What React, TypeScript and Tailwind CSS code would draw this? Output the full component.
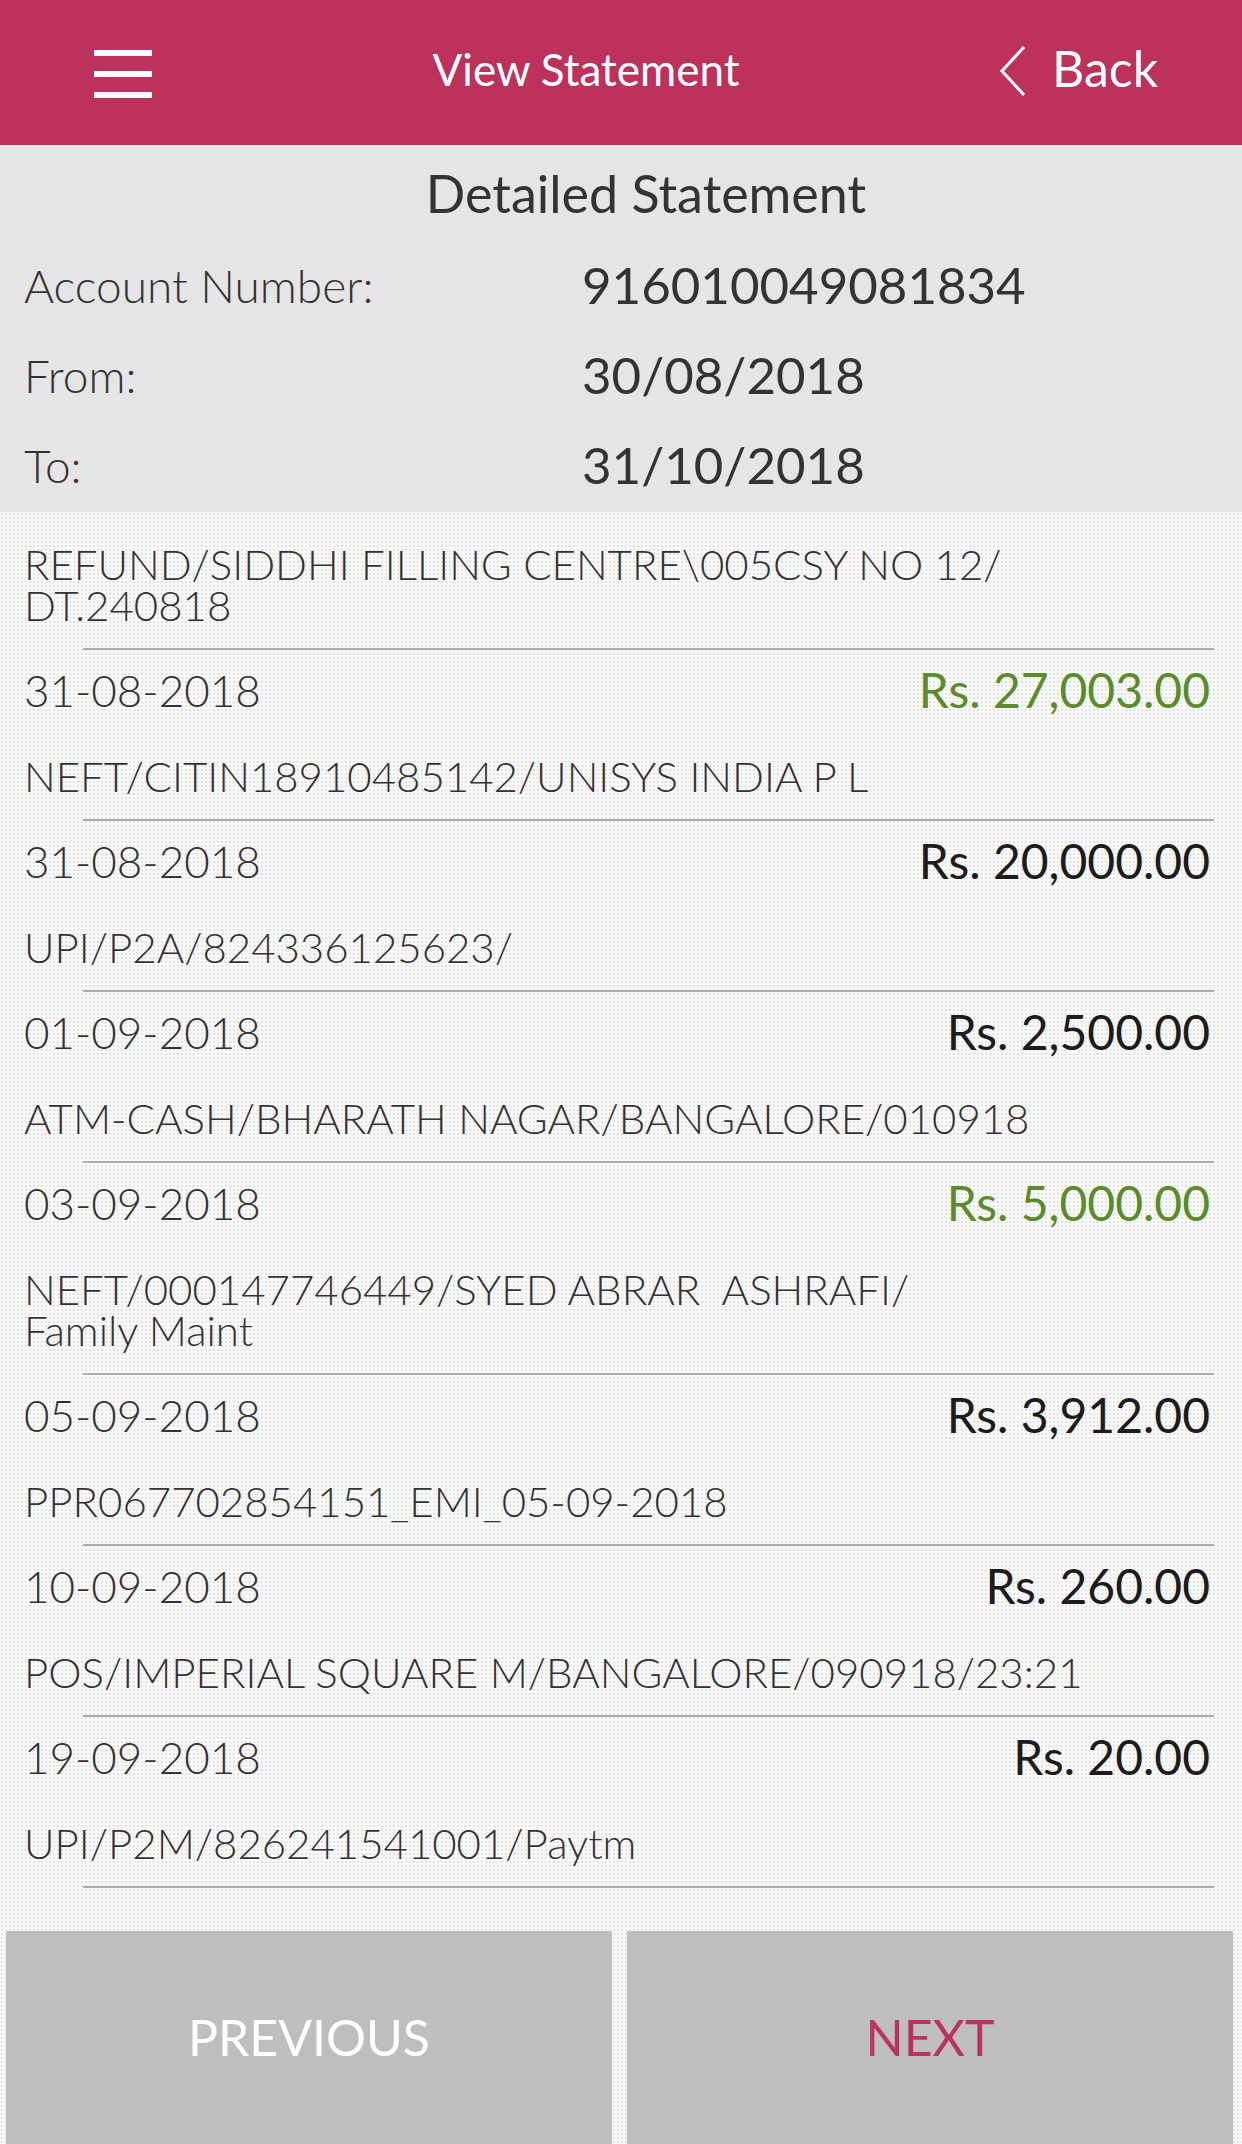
import React from "react";

type Tx = { desc: string[]; date: string; amount: string; credit?: boolean; last?: boolean };

const txs: Tx[] = [
  { desc: ["REFUND/SIDDHI FILLING CENTRE\\005CSY NO 12/", "DT.240818"], date: "31-08-2018", amount: "Rs. 27,003.00", credit: true },
  { desc: ["NEFT/CITIN18910485142/UNISYS INDIA P L"], date: "31-08-2018", amount: "Rs. 20,000.00" },
  { desc: ["UPI/P2A/824336125623/"], date: "01-09-2018", amount: "Rs. 2,500.00" },
  { desc: ["ATM-CASH/BHARATH NAGAR/BANGALORE/010918"], date: "03-09-2018", amount: "Rs. 5,000.00", credit: true },
  { desc: ["NEFT/000147746449/SYED ABRAR  ASHRAFI/", "Family Maint"], date: "05-09-2018", amount: "Rs. 3,912.00" },
  { desc: ["PPR067702854151_EMI_05-09-2018"], date: "10-09-2018", amount: "Rs. 260.00" },
  { desc: ["POS/IMPERIAL SQUARE M/BANGALORE/090918/23:21"], date: "19-09-2018", amount: "Rs. 20.00" },
  { desc: ["UPI/P2M/826241541001/Paytm"], date: "", amount: "", last: true },
];

function TxItem({ tx, first }: { tx: Tx; first: boolean }) {
  return (
    <div className={first ? "pl-[24px] pr-[32px]" : "pl-[24px] pr-[32px] mt-[42px]"}>
      <div className="text-[42px] leading-[41px] font-light text-[#333333] whitespace-pre">
        {tx.desc.map((l, i) => (
          <React.Fragment key={i}>
            {i > 0 && <br />}
            {l}
          </React.Fragment>
        ))}
      </div>
      <div className="mt-[22px] ml-[59px] mr-[-4px] h-[2px] bg-[#acacac]" />
      {!tx.last && (
        <div className="mt-[16px] h-[48px] flex items-center justify-between">
          <span className="text-[44px] font-light text-[#333333]">{tx.date}</span>
          <span className={tx.credit ? "text-[48px] text-[#5b8c2a]" : "text-[48px] text-[#1c1c1c]"}>{tx.amount}</span>
        </div>
      )}
    </div>
  );
}

export default function App() {
  return (
    <div className="w-[1242px] h-[2144px] flex flex-col overflow-hidden font-['Lato','Noto_Sans',sans-serif] bg-[#f9f9f9] bg-[radial-gradient(circle,#e3e3e3_1px,transparent_1.3px)] bg-[length:4px_4px]">
      {/* Header */}
      <div className="h-[145px] shrink-0 bg-[#bc325d] flex items-center text-white">
        <div className="w-[246px] pl-[94px] flex flex-col gap-[15px] pt-[2px]">
          <div className="w-[58px] h-[6px] bg-white" />
          <div className="w-[58px] h-[6px] bg-white" />
          <div className="w-[58px] h-[6px] bg-white" />
        </div>
        <div className="flex-1 text-center text-[44px] pb-[8px]">View Statement</div>
        <div className="w-[316px] pl-[73px] flex items-center pb-[8px]">
          <svg width="28" height="52" viewBox="0 0 28 52" className="mt-[4px]">
            <polyline points="25,2 3,26 25,50" fill="none" stroke="white" strokeWidth="3" strokeLinejoin="miter" />
          </svg>
          <span className="ml-[25px] text-[50px]">Back</span>
        </div>
      </div>

      {/* Summary */}
      <div className="shrink-0 bg-[#e5e5e5] h-[367px] text-[#333333]">
        <div className="h-[95px] flex items-center justify-center pl-[50px] text-[52px]">Detailed Statement</div>
        <div className="grid grid-cols-[558px_1fr] pl-[24px] auto-rows-[90px] items-center">
          <div className="text-[46px] font-light">Account Number:</div>
          <div className="text-[51px]">916010049081834</div>
          <div className="text-[46px] font-light">From:</div>
          <div className="text-[51px]">30/08/2018</div>
          <div className="text-[46px] font-light">To:</div>
          <div className="text-[51px]">31/10/2018</div>
        </div>
      </div>

      {/* List */}
      <div className="flex-1 overflow-hidden pt-[32px]">
        {txs.map((tx, i) => (
          <TxItem key={i} tx={tx} first={i === 0} />
        ))}
      </div>

      {/* Buttons */}
      <div className="h-[213px] shrink-0 flex gap-[15px] pl-[6px] pr-[9px]">
        <button className="flex-1 bg-[#bebebe] text-white text-[50px] flex items-center justify-center">PREVIOUS</button>
        <button className="flex-1 bg-[#bebebe] text-[#bc325d] text-[50px] flex items-center justify-center">NEXT</button>
      </div>
    </div>
  );
}
